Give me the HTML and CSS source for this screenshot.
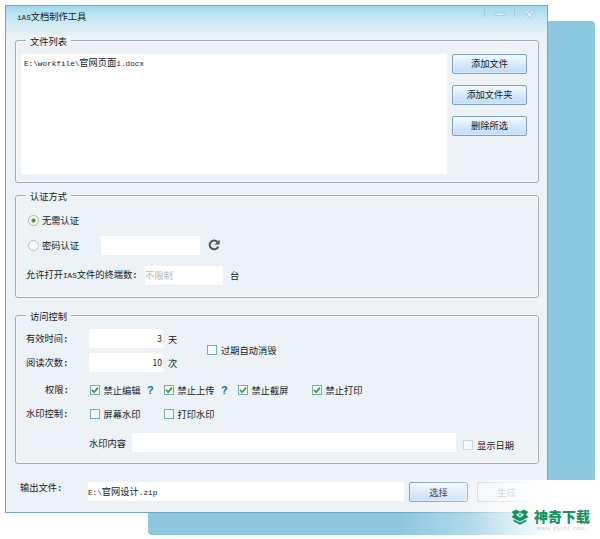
FILE: index.html
```
<!DOCTYPE html>
<html lang="zh-CN">
<head>
<meta charset="utf-8">
<title>iAS文档制作工具</title>
<link rel="stylesheet" href="styles.css">
</head>
<body>
<div class="backdrop"></div>
<main class="window">
  <header class="titlebar">
    <h1><span class="mono">iAS</span>文档制作工具</h1>
    <div class="controls">
      <span class="control"><svg width="10" height="8" viewBox="0 0 10 8"><rect x="1" y="3" width="8" height="2.4" fill="#e4f4fa" stroke="#9dbcca" stroke-width=".6"/></svg></span>
      <span class="control"><svg width="11" height="9" viewBox="0 0 11 9"><path d="M2 1l7 7M9 1L2 8" stroke="#9dbcca" stroke-width="2.7"/><path d="M2 1l7 7M9 1L2 8" stroke="#e4f4fa" stroke-width="1.5"/></svg></span>
    </div>
  </header>

  <section class="group files">
    <h2>文件列表</h2>
    <div class="file-list"><span class="mono">E:\workfile\</span>官网页面<span class="mono">1.docx</span></div>
    <div class="file-actions">
      <button>添加文件</button>
      <button>添加文件夹</button>
      <button>删除所选</button>
    </div>
  </section>

  <section class="group auth">
    <h2>认证方式</h2>
    <div class="row"><i class="radio on"></i><span>无需认证</span></div>
    <div class="row"><i class="radio"></i><span>密码认证</span><div class="field password"></div>
      <svg class="refresh" width="12" height="12" viewBox="0 0 12 12"><path d="M10.2 7.6A4.4 4.4 0 1 1 9.4 3" fill="none" stroke="#4b535f" stroke-width="2"/><path d="M11.6.6v5H6.6z" fill="#4b535f"/></svg>
    </div>
    <div class="row terminals"><span>允许打开<span class="mono">IAS</span>文件的终端数<b class="colon">:</b></span><div class="field limit">不限制</div><span>台</span></div>
  </section>

  <section class="group access">
    <h2>访问控制</h2>
    <div class="limits">
      <div class="limit-rows">
        <div class="row"><span class="label">有效时间<b class="colon">:</b></span><div class="field number">3</div><span>天</span></div>
        <div class="row"><span class="label">阅读次数<b class="colon">:</b></span><div class="field number">10</div><span>次</span></div>
      </div>
      <div class="check"><i class="box"></i>过期自动消毁</div>
    </div>
    <div class="options">
      <span class="label">权限<b class="colon">:</b></span>
      <div class="check"><i class="box on"><svg viewBox="0 0 8 8"><path d="M1 3.8l2.1 2.4L7 1.6"/></svg></i>禁止编辑<b class="help">?</b></div>
      <div class="check"><i class="box on"><svg viewBox="0 0 8 8"><path d="M1 3.8l2.1 2.4L7 1.6"/></svg></i>禁止上传<b class="help">?</b></div>
      <div class="check"><i class="box on"><svg viewBox="0 0 8 8"><path d="M1 3.8l2.1 2.4L7 1.6"/></svg></i>禁止截屏</div>
      <div class="check"><i class="box on"><svg viewBox="0 0 8 8"><path d="M1 3.8l2.1 2.4L7 1.6"/></svg></i>禁止打印</div>
      <span class="label">水印控制<b class="colon">:</b></span>
      <div class="check"><i class="box"></i>屏幕水印</div>
      <div class="check"><i class="box"></i>打印水印</div>
    </div>
    <div class="row watermark-row"><span>水印内容</span><div class="field content"></div><div class="check"><i class="box pale"></i>显示日期</div></div>
  </section>

  <footer class="output">
    <span class="output-label">输出文件<b class="colon">:</b></span>
    <div class="field path"><span class="mono">E:\</span>官网设计<span class="mono">.zip</span></div>
    <button class="select">选择</button>
    <button class="generate">生成</button>
  </footer>
</main>

<aside class="brand">
  <svg width="18" height="16" viewBox="0 0 18 16"><path d="M5 .4L9 2.4l4-2L17.3 3 15 5.6 17.3 8 13 10.4 9 12.4 5 10.4.7 8 3 5.6.7 3zM9 3.6L4.9 5.8 9 8.8l4.1-3z" fill="#15945f" fill-rule="evenodd"/><path d="M9 4.6v2.6M7.7 5.9h2.6" stroke="#15945f"/><path d="M2.5 10.3L9 13.6l6.5-3.3v2L9 15.8l-6.5-3.5z" fill="#15945f"/></svg>
  <div class="brand-text"><strong>神奇下载</strong><small>www.sqxzz.com</small></div>
</aside>
</body>
</html>
```
FILE: styles.css
```
* { box-sizing: border-box; }
body {
  margin: 0;
  width: 600px;
  height: 539px;
  position: relative;
  overflow: hidden;
  background: #fff;
  padding: 5px;
  color: #15191c;
  font: 9.25px/12px "Noto Sans CJK SC", sans-serif;
  white-space: nowrap;
}
.backdrop {
  position: absolute;
  left: 148px;
  top: 21px;
  width: 447px;
  height: 514px;
  border-radius: 4px;
  background: #8dc8e0;
}
.window {
  position: relative;
  width: 543px;
  height: 508px;
  border: 1px solid #76a5bd;
  background: linear-gradient(#a0daee 0, #c9e8f3 14px, #eaf1f6 31px, #edf2f6 50px);
  padding: 0 8px 0 9px;
}
.mono { font-family: "Liberation Mono", "Noto Sans CJK SC", monospace; font-size: 7.7px; }
.titlebar { height: 34px; display: flex; justify-content: space-between; }
h1 { margin: 4px 0 0 2px; font-size: 9.25px; line-height: 12px; font-weight: 400; }
.controls { display: flex; height: 11px; margin-right: -5px; }
.control { width: 30px; border-left: 1px solid #a4cbdc; text-align: center; padding-top: 4px; line-height: 0; }

.group {
  position: relative;
  border: 1px solid #a5abb1;
  border-radius: 3px;
  box-shadow: inset 0 0 0 1px #f8fafc;
}
h2 {
  position: absolute;
  top: -6px;
  left: 10px;
  margin: 0;
  padding: 0 4px;
  background: #edf2f6;
  font-size: 9.25px;
  line-height: 12px;
  font-weight: 400;
}
.files { height: 143px; margin-bottom: 12px; padding: 13px 11px 8px 5px; display: flex; justify-content: space-between; }
.file-list { width: 426px; height: 120px; background: #fff; padding: 2px 3px; }
.file-actions { width: 75px; display: flex; flex-direction: column; gap: 11px; }
button {
  height: 20px;
  padding: 0 0 1px;
  border: 1px solid #7e9fbf;
  border-radius: 2px;
  background: linear-gradient(#f5faff, #d6e7fa 55%, #bfdcfb);
  box-shadow: inset 0 0 0 1px #e9f4ff80;
  color: #15191c;
  font: 9.25px/12px "Noto Sans CJK SC", sans-serif;
}
.file-actions button { padding-bottom: 2px; }
.row { display: flex; align-items: center; }
.field { background: #fff; height: 19px; line-height: 19px; }
.colon { font: bold 9px/12px "Liberation Mono", monospace; }

.auth { height: 103px; margin-bottom: 17px; padding: 15px 11px 0 10px; }
.auth .row { height: 19px; margin-bottom: 6px; }
.auth .row > span { margin-top: -1px; }
.radio { width: 11px; height: 11px; margin: 0 3px 0 2px; border: 1px solid #b6bec3; border-radius: 50%; background: #f9fcfb; }
.radio.on { border-color: #a5bba0; background: radial-gradient(circle, #529821 0 1.6px, #f6fbf3 2.5px); }
.password { width: 99px; margin-left: 22px; }
.refresh { margin-left: 8px; margin-top: -2px; }
.auth .terminals { margin-top: 11px; }
.limit { width: 78px; margin: 0 7px 0 4px; color: #b5b8ba; }
.terminals > span:first-child { width: 115px; }

.access { height: 149px; padding: 13px 6px 0 10px; }
.limits { display: flex; height: 44px; }
.limit-rows { width: 181px; }
.limit-rows .row { height: 19px; margin-bottom: 5px; }
.label { width: 63px; }
.number { width: 74px; padding-right: 1px; text-align: right; font-size: 8.5px; line-height: 18px; }
.number + span { margin-left: 5px; }
.check { display: flex; align-items: center; }
.box { flex: none; width: 10px; height: 10px; margin-right: 4px; border: 1px solid #75abc5; background: #f5fbfe; }
.options .box { margin-right: 3.5px; }
.box.pale { border-color: #c5d7e1; }
.box svg { display: block; width: 8px; height: 8px; }
.box path { fill: none; stroke: #46952e; stroke-width: 1.7; }
.limits .check { height: 42px; }
.options { display: grid; grid-template-columns: 64px 74px 74px 74px 74px; grid-template-rows: 24px 24px; align-items: center; margin-top: 5px; }
.options .label:first-child { padding-left: 19px; }
.options .label:nth-of-type(2) { grid-column: 1; }
.help { margin-left: 6.5px; color: #276c9b; font: bold 11px/12px "Liberation Sans", sans-serif; }
.watermark-row { margin: 7px 0 0 63px; }
.content { width: 324px; margin: 0 7px 0 6px; }
.watermark-row .check { padding-top: 4px; }

.output { display: flex; margin: 18px 0 0 5px; }
.output-label { width: 68px; margin-top: -1px; }
.path { width: 316px; }
.select { width: 59px; margin-left: 5px; }
.generate { width: 59px; margin-left: 9px; border-color: #c2ccd4; background: #eff3f7; color: #909699; box-shadow: none; }

.brand {
  position: absolute;
  left: 400px;
  top: 480px;
  width: 200px;
  height: 59px;
  padding: 29px 0 0 111px;
  display: flex;
  gap: 5px;
  background: linear-gradient(90deg, #fff0 0, #ffffff50 35%, #ffffffa0 52%, #ffffffee 70%, #fff 78%);
}
.brand-text { display: flex; flex-direction: column; }
.brand strong { color: #15945f; font-size: 14px; line-height: 15px; font-weight: 900; }
.brand small { margin: 2px 0 0 3px; color: #c3ceca; font: 5.5px/5px "Liberation Sans", sans-serif; letter-spacing: .7px; }
```
